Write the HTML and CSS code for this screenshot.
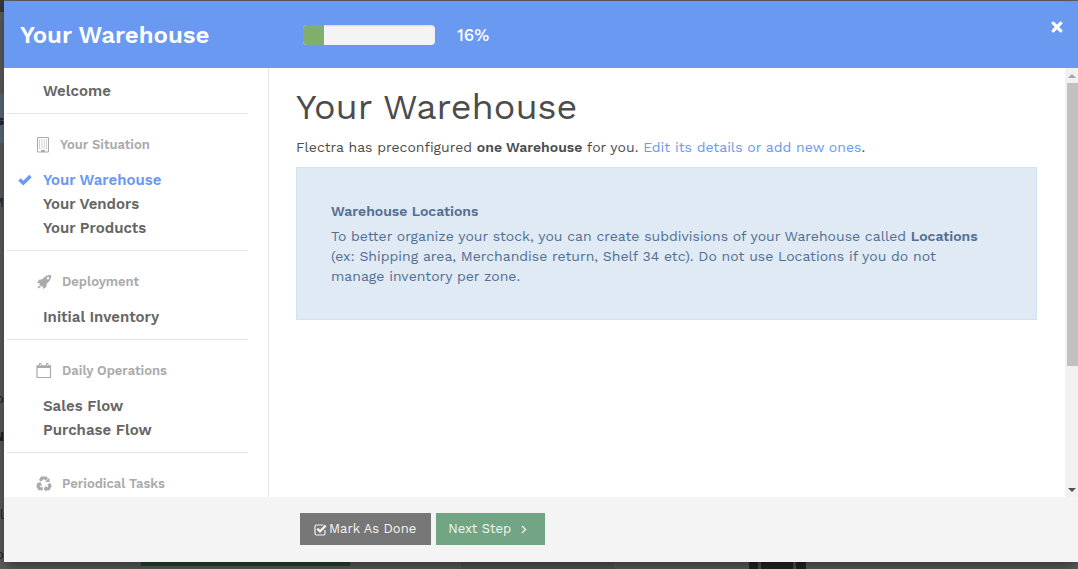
FILE: index.html
```html
<!DOCTYPE html>
<html lang="en">
<head>
<meta charset="utf-8">
<title>Your Warehouse</title>
<link rel="stylesheet" href="styles.css">
</head>
<body>
<div class="behind" aria-hidden="true">
  <i class="patch patch-head"></i><i class="patch patch-blue"></i><i class="patch patch-green"></i><i class="patch patch-card"></i><i class="patch patch-dark"></i>
  <b class="ghost g1">s</b><span class="ghost g2">M</span><span class="ghost g3">lo</span><b class="ghost g4">N</b><span class="ghost g5">l</span><span class="ghost g6">o</span>
</div>
<div class="modal" role="dialog" aria-labelledby="modal-title">
  <header class="modal-header">
    <h2 class="modal-title" id="modal-title">Your Warehouse</h2>
    <div class="progress"><div class="progress-bar" style="width:16%"></div></div>
    <span class="percent">16%</span>
    <button class="close" aria-label="Close"><svg width="12" height="12" viewBox="0 0 12 12"><path d="M2.2 2.2l7.6 7.6M9.8 2.2L2.2 9.8" stroke="#fff" stroke-width="3.2" stroke-linecap="round"/></svg></button>
  </header>
  <div class="modal-body">
    <nav class="sidebar">
      <ul class="steps"><li><a href="#welcome">Welcome</a></li></ul>
      <section class="group">
        <h3 class="group-title"><svg width="14" height="16" viewBox="0 0 14 16" fill="none" stroke="#aaa"><path d="M1.5.5h11v14.500h-11z"/><path d="M3 3h8M3 5h8M3 7h8M3 9h8M3 11h8" stroke-dasharray="1 1.33"/><path d="M5 14h4" stroke-width="2"/></svg>Your Situation</h3>
        <ul class="steps">
          <li class="active"><svg class="tick" width="14" height="12" viewBox="0 0 14 12"><path d="M1.500 5.500l3.800 3.700 7.200-7.200" fill="none" stroke="#6999f1" stroke-width="3.400"/></svg><a href="#warehouse">Your Warehouse</a></li>
          <li><a href="#vendors">Your Vendors</a></li>
          <li><a href="#products">Your Products</a></li>
        </ul>
      </section>
      <section class="group">
        <h3 class="group-title"><svg width="16" height="16" viewBox="0 0 16 16" fill="#aaa"><path fill-rule="evenodd" d="M15.200 1C11 .8 8.500 2.500 6.300 5.300L3 5.700 1 9l3 .2-.7 1.300 2.200 2.200 1.300-.7.300 3 3.300-2 .3-3.300C13.500 7.500 15.400 5 15.200 1zM12 3a1.200 1.200 0 1 1 0 2.400A1.200 1.200 0 0 1 12 3z"/><path d="M2.800 11.200l2 2L1.500 14.500z"/></svg>Deployment</h3>
        <ul class="steps"><li><a href="#inventory">Initial Inventory</a></li></ul>
      </section>
      <section class="group">
        <h3 class="group-title"><svg width="16" height="16" viewBox="0 0 16 16" fill="none" stroke="#aaa"><path d="M1 2.800h13.500v11.700H1z" stroke-width="1.200"/><path d="M1 4h13.500" stroke-width="2"/><path d="M3.500.5h1.500v3h-1.500zM10.500.5h1.500v3h-1.500z" fill="#fff"/></svg>Daily Operations</h3>
        <ul class="steps">
          <li><a href="#sales">Sales Flow</a></li>
          <li><a href="#purchase">Purchase Flow</a></li>
        </ul>
      </section>
      <section class="group">
        <h3 class="group-title"><svg width="16" height="16" viewBox="0 0 16 16"><g fill="none" stroke="#aaa" stroke-width="3"><path d="M4 5l1.900-3h3.800l1 1.600"/><path d="M12.600 7.300l1.500 2.600-1.500 2.900H9.500"/><path d="M6.800 12.800H3.400L1.900 10l1.400-2.300"/></g><g fill="#aaa"><path d="M13.500 1.700v4.600L9 5.800z"/><path d="M10.500 9.300v6.400L7.500 12.800z"/><path d="M.3 7.400l4.300-1.300 1.500 4.300z"/></g><path d="M2.600 4.300l3.600 2.400M11 8.300l3.500-2M7.500 11v4.500" stroke="#fff" stroke-width=".8"/></svg>Periodical Tasks</h3>
      </section>
    </nav>
    <main class="content">
      <h1 class="heading">Your Warehouse</h1>
      <p class="intro">Flectra has preconfigured <strong>one Warehouse</strong> for you. <a href="#edit">Edit its details or add new ones</a>.</p>
      <div class="alert">
        <h4 class="alert-title">Warehouse Locations</h4>
        <p class="alert-text">To better organize your stock, you can create subdivisions of your Warehouse called <strong>Locations</strong><br>(ex: Shipping area, Merchandise return, Shelf 34 etc). Do not use Locations if you do not<br>manage inventory per zone.</p>
      </div>
    </main>
    <div class="scrollbar" aria-hidden="true">
      <i class="arrow arrow-up"></i>
      <div class="track"><div class="thumb"></div></div>
      <i class="arrow arrow-down"></i>
    </div>
  </div>
  <footer class="modal-footer">
    <button class="btn done"><svg width="13" height="13" viewBox="0 0 13 13" fill="none" stroke="#f4f4f4"><path d="M11 7v3.500a1.500 1.500 0 0 1-1.500 1.500h-7A1.500 1.500 0 0 1 1 10.500v-7A1.500 1.500 0 0 1 2.500 2h7" stroke-width="1.200"/><path d="M3.300 5.700l2.700 2.600 5.800-5.800" stroke-width="2.300"/></svg>Mark As Done</button>
    <button class="btn next">Next Step<svg width="6" height="9" viewBox="0 0 6 9" fill="none" stroke="#f4f4f4" stroke-width="1.300"><path d="M1 1l3.500 3.500L1 8"/></svg></button>
  </footer>
</div>
</body>
</html>
```
FILE: styles.css
```css
* { box-sizing: border-box; }

body {
  margin: 0;
  height: 100vh;
  padding: 1px 0 7px 4px;
  overflow: hidden;
  background: #626262;
  color: #4c4c4c;
  font-family: "Work Sans", Inter, sans-serif;
  font-size: 14px;
  line-height: 20px;
}

h1, h2, h3, h4, p, ul { margin: 0; padding: 0; }
a { color: #6999f1; text-decoration: none; }
strong { font-weight: 600; }
svg { flex: none; }

/* dimmed page under the dialog */
.behind { position: absolute; inset: 0; overflow: hidden; color: #222; }
.patch { position: absolute; }
.patch-head { left: 0; top: 0; width: 4px; height: 12px; background: #3a3a3a; }
.patch-blue { left: 0; top: 94px; width: 4px; height: 49px; background: #5f7084; }
.patch-green { left: 141px; bottom: 3px; width: 209px; height: 4px; background: #2b4a38; }
.patch-card { left: 461px; bottom: 0; width: 153px; height: 8px; background: #5a5a5a; }
.patch-dark { left: 749px; bottom: 0; width: 57px; height: 8px; background: linear-gradient(90deg, #262626 9px, #555 9px 12px, #262626 12px 44px, #555 44px 47px, #262626 47px); }
.ghost { position: absolute; right: calc(100% - 4px); }
.g1 { top: 110px; }
.g2 { top: 192px; }
.g3 { top: 388px; }
.g4 { top: 426px; }
.g5 { top: 504px; }
.g6 { top: 544px; }

.modal {
  position: relative;
  display: flex;
  flex-direction: column;
  height: 100%;
  background: #fff;
  box-shadow: 0 5px 15px rgba(0, 0, 0, .5);
}

.modal-header {
  display: flex;
  align-items: center;
  flex: none;
  height: 67px;
  padding: 0 15px 0 16px;
  background: #6999f1;
  color: #fff;
}
.modal-title { width: 283px; font-size: 24px; line-height: 32px; font-weight: 600; }
.progress {
  width: 132px;
  height: 20px;
  border-radius: 4px;
  overflow: hidden;
  background: #f4f4f4;
  box-shadow: inset 0 1px 2px rgba(0, 0, 0, .1);
}
.progress-bar { height: 100%; background: #80af6b; }
.percent { margin-left: 22px; font-size: 17px; font-weight: 500; }
.close { display: flex; margin: 0 0 16px auto; padding: 0; border: 0; background: none; }

.modal-body { display: flex; flex: 1; min-height: 0; }

.sidebar {
  flex: none;
  width: 265px;
  padding: 11px 20px 0 3px;
  border-right: 1px solid #e4e4e4;
  overflow: hidden;
}
.steps { list-style: none; padding-bottom: 10px; }
.steps li { display: flex; align-items: center; padding-left: 36px; line-height: 24px; font-size: 15px; font-weight: 600; }
.steps a { color: #666; }
.steps .active { padding-left: 11px; gap: 11px; }
.steps .active a { color: #6999f1; }
.group { border-top: 1px solid #e4e4e4; padding-top: 21px; }
.group-title {
  display: flex;
  align-items: center;
  gap: 10px;
  margin-bottom: 13px;
  padding-left: 29px;
  color: #aaa;
  font-size: 13px;
  line-height: 20px;
  font-weight: 600;
}

.content { flex: 1; min-width: 0; padding: 19px 28px 0 27px; }
.heading { font-size: 36px; line-height: 40px; font-weight: 400; }
.intro { margin: 10px 0; }
.alert { padding: 33px 34px; border: 1px solid #cfe4ef; background: #e0eaf5; color: #526f92; }
.alert-title { margin-bottom: 5px; font-size: 14px; font-weight: 600; }

.scrollbar { display: flex; flex-direction: column; flex: none; width: 13px; background: #f1f1f1; }
.track { flex: 1; padding-left: 2px; }
.thumb { height: 71%; background: #c1c1c1; }
.arrow { height: 15px; display: flex; align-items: center; justify-content: flex-end; padding-right: 2px; }
.arrow::before { content: ""; border: 4px solid transparent; border-width: 0 4px 4px; border-bottom-color: #a3a3a3; }
.arrow-down::before { border-width: 4px 4px 0; border-top-color: #505050; }

.modal-footer { display: flex; gap: 5px; flex: none; padding: 16px 0 17px 296px; background: #f4f4f4; }
.btn {
  display: flex;
  align-items: center;
  height: 32px;
  border: 0;
  padding: 0 12px;
  color: #f4f4f4;
  font: 13px/20px "Work Sans", Inter, sans-serif;
}
.done { gap: 2px; padding: 0 15px 0 14px; background: #777; }
.next { gap: 10px; padding-right: 18px; background: #71a583; }
```
